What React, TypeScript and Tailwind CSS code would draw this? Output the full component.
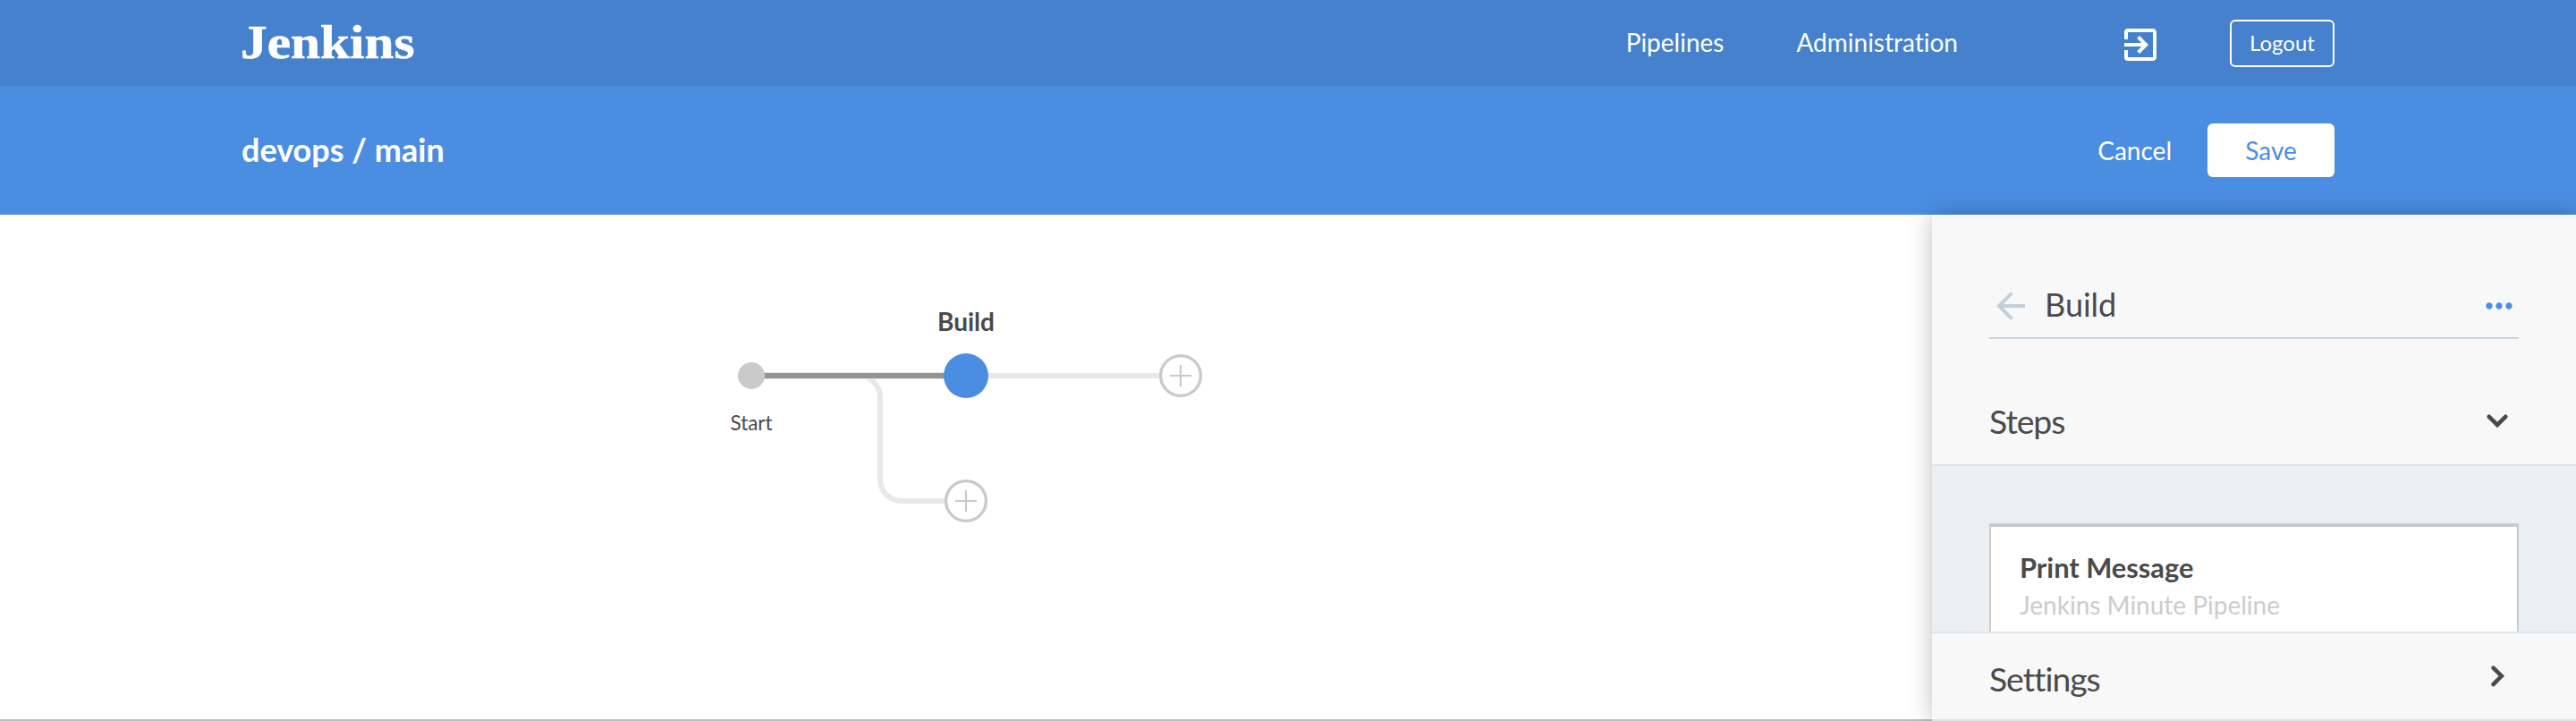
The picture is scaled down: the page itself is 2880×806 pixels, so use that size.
import React from "react";
import { MdExitToApp, MdArrowBack, MdMoreHoriz } from "react-icons/md";

function Logo() {
  return (
    <svg width="200" height="56" viewBox="0 0 200 56" className="block overflow-visible">
      <text
        x="-1"
        y="44.7"
        textLength="194.5"
        lengthAdjust="spacingAndGlyphs"
        fill="#fff"
        stroke="#fff"
        strokeWidth="0.6"
        fontFamily='"Liberation Serif", serif'
        fontWeight="700"
        fontSize="52"
      >
        Jenkins
      </text>
    </svg>
  );
}

function Chevron({ open }: { open?: boolean }) {
  return (
    <svg width="48" height="48" viewBox="0 0 48 48" fill="none" stroke="#4a4a4a" strokeWidth="4.6" strokeLinecap="round">
      <path d={open ? "M14.8 18.8L24 28L33.2 18.8" : "M19.6 14.6L28.8 23.8L19.6 33"} />
    </svg>
  );
}

function AddNode({ cx, cy }: { cx: number; cy: number }) {
  return (
    <g stroke="#cacaca">
      <circle cx={cx} cy={cy} r="22.4" fill="#fff" strokeWidth="3.4" />
      <path d={`M${cx - 12} ${cy}h24M${cx} ${cy - 12}v24`} strokeWidth="2.2" />
    </g>
  );
}

function PipelineGraph() {
  return (
    <div className="relative min-w-0 flex-1 border-b-2 border-[#bdbdbd] bg-white text-[#4a4a4a]">
      <svg width="600" height="300" viewBox="800 320 600 300" className="absolute left-[800px] top-[80px]" fill="none">
        <path d="M840 420H1080" stroke="#e8e8e8" strokeWidth="8" />
        <path d="M1080 420H1320" stroke="#e8e8e8" strokeWidth="6" />
        <path d="M960 420A24 24 0 0 1 984 444V536A24 24 0 0 0 1008 560H1080" stroke="#e8e8e8" strokeWidth="6" />
        <path d="M840 420H1080" stroke="#949494" strokeWidth="6" />
        <circle cx="840" cy="420" r="15" fill="#cacaca" />
        <circle cx="1080" cy="420" r="25" fill="#4b8ee1" />
        <AddNode cx={1320} cy={420} />
        <AddNode cx={1080} cy={560} />
      </svg>
      <span className="absolute left-[980px] top-[102px] w-[200px] text-center text-[28px] font-bold leading-[34px]">Build</span>
      <span className="absolute left-[740px] top-[219px] w-[200px] text-center text-[22.4px] leading-[28px]">Start</span>
    </div>
  );
}

function StagePanel() {
  return (
    <aside className="relative flex w-[720px] shrink-0 flex-col border-b-2 border-[#dde3e7] bg-[#f8f8f8] text-[#4a4a4a] shadow-[0_0_24px_rgba(0,0,0,0.25)]">
      <div className="mx-16 flex h-[139px] shrink-0 items-end border-b-2 border-[#c8d3df] pb-[11px]">
        <div className="flex h-12 w-full items-center">
          <MdArrowBack size={48} className="text-[#c3cfd8]" />
          <span className="ml-3.5 flex-1 pb-[3px] text-[36px] leading-[45px]">Build</span>
          <MdMoreHoriz size={44} className="text-[#4b8ee1]" />
        </div>
      </div>
      <div className="flex h-[142px] shrink-0 items-center justify-between border-b-2 border-[#dde3e7] px-16 pt-[43px]">
        <h2 className="text-[37.3px] leading-[44px] tracking-[-1px]">Steps</h2>
        <Chevron open />
      </div>
      <div className="h-[185px] shrink-0 overflow-hidden bg-[#ecf0f3] px-16 pt-16">
        <div className="h-[160px] border-2 border-t-4 border-[#cacaca] bg-white pl-8 pt-[25px]">
          <div className="text-[30.8px] font-bold leading-[41px]">Print Message</div>
          <div className="text-[28px] leading-[42px] text-[#cccccc]">Jenkins Minute Pipeline</div>
        </div>
      </div>
      <div className="flex flex-1 items-center justify-between border-t-2 border-[#dde3e7] px-16">
        <h2 className="pt-[5px] text-[37.3px] leading-[44px] tracking-[-1px]">Settings</h2>
        <Chevron />
      </div>
    </aside>
  );
}

export default function App() {
  return (
    <div className="flex h-[806px] w-[2880px] flex-col overflow-hidden bg-white font-['Lato',sans-serif] [font-variant-ligatures:none]">
      <header className="flex h-24 shrink-0 items-center bg-[#4581cc] px-[270px] text-white">
        <Logo />
        <nav className="ml-auto flex items-center text-[28px] leading-[34px]">
          <a className="mr-[81px] pb-0.5">Pipelines</a>
          <a className="mr-[180px] pb-0.5">Administration</a>
          <MdExitToApp size={48} className="mr-[76px] mt-1" />
          <button className="h-[53px] w-[117px] rounded-md border-2 border-white text-[24px] leading-none">Logout</button>
        </nav>
      </header>
      <div className="flex h-36 shrink-0 items-center bg-[#4b8ee1] px-[270px] text-white">
        <h1 className="pb-0.5 text-[36px] font-bold leading-[44px]">devops / main</h1>
        <div className="ml-auto flex items-center text-[28px] leading-[34px]">
          <button className="mr-10">Cancel</button>
          <button className="h-[60px] w-[142px] rounded-md bg-white text-[#4b8ee1]">Save</button>
        </div>
      </div>
      <main className="flex min-h-0 flex-1">
        <PipelineGraph />
        <StagePanel />
      </main>
    </div>
  );
}
